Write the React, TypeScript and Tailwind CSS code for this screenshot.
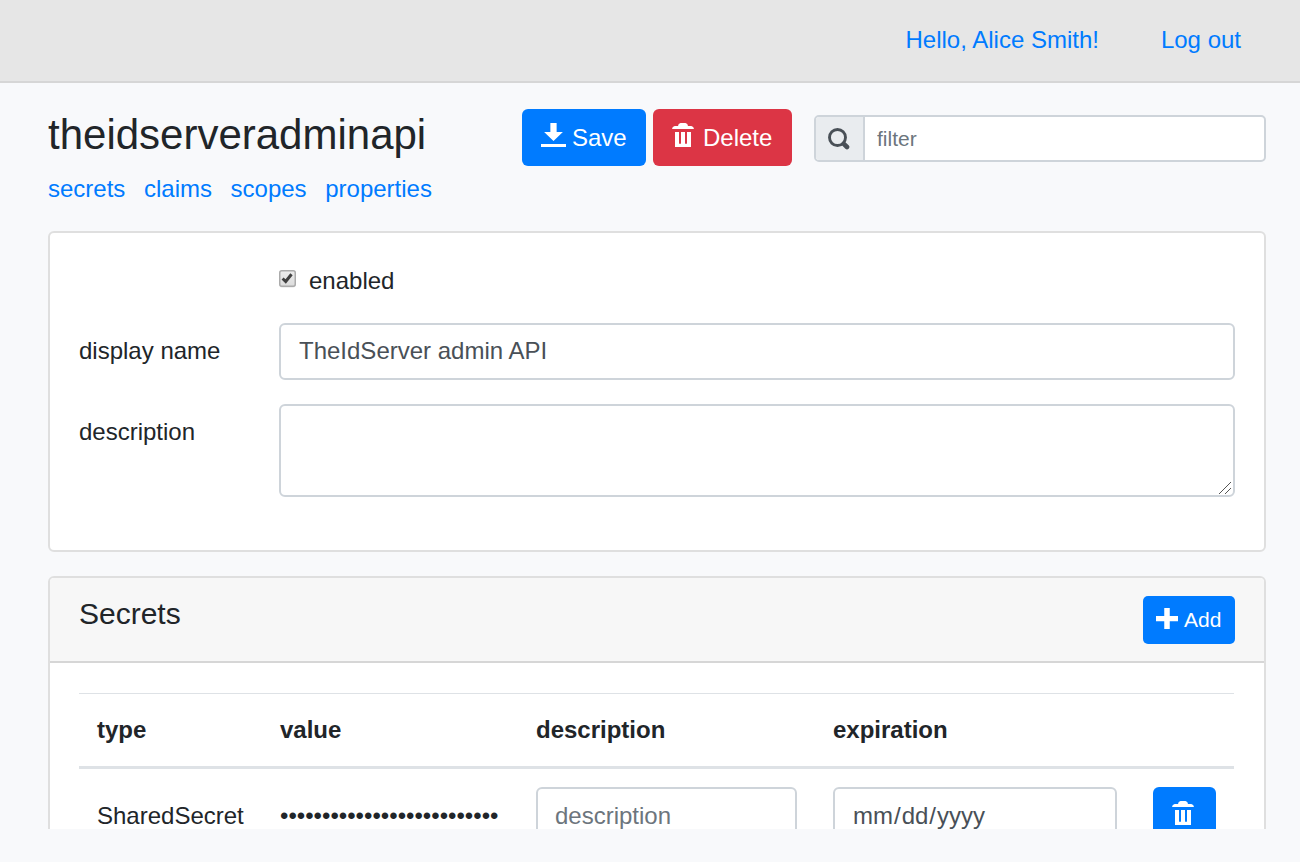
import React from 'react';

const ICONS = {
  download: 'M3 0v3h-2l3 3 3-3h-2v-3h-2zm-3 7v1h8v-1h-8z',
  plus: 'M3 0v3h-3v2h3v3h2v-3h3v-2h-3v-3h-2z',
};

function Icon({ name, className }: { name: keyof typeof ICONS; className: string }) {
  return (
    <svg viewBox="0 0 8 8" preserveAspectRatio="none" className={className} fill="currentColor" aria-hidden="true">
      <path d={ICONS[name]} />
    </svg>
  );
}

function SearchIcon({ className }: { className: string }) {
  return (
    <svg viewBox="0 0 22 22" className={className} fill="none" stroke="currentColor" aria-hidden="true">
      <circle cx="9.500" cy="9.500" r="8" strokeWidth="2.900" />
      <path d="M15.800 15.800 19 19" strokeWidth="4.600" strokeLinecap="round" />
    </svg>
  );
}

/* Trash can with two slots open at the top */
function TrashIcon({ className }: { className: string }) {
  return (
    <svg viewBox="0 0 24 24" className={className} fill="currentColor" aria-hidden="true">
      <path d="M8.500 0h5q2.300.3 2.500 3h3.300q2.400.4 2.700 3H0q.3-2.600 2.700-3H6q.2-2.700 2.500-3zM3 9h4v10.700q0 1.300 1 1.300t1-1.300V9h4v10.700q0 1.300 1 1.300t1-1.300V9h4v15H3z" />
    </svg>
  );
}

function Header() {
  return (
    <header className="flex h-[83px] shrink-0 justify-end border-b-2 border-[#d6d6d6] bg-[#e6e6e6] pr-[59px] pt-[22px] text-[#007bff]">
      <a className="mr-[62px]">Hello, Alice Smith!</a>
      <a>Log out</a>
    </header>
  );
}

function Toolbar() {
  return (
    <div className="flex h-[148px] pt-[26px]">
      <div className="w-[474px]">
        <h1 className="h-[62px] text-[42px] leading-[51px]">theidserveradminapi</h1>
        <nav className="flex gap-[18.600px] text-[#007bff]">
          <a>secrets</a>
          <a>claims</a>
          <a>scopes</a>
          <a>properties</a>
        </nav>
      </div>
      <button className="flex h-[57px] w-[124px] rounded-[6px] bg-[#007bff] pl-[19px] pt-[11px] text-white">
        <Icon name="download" className="mt-[3px] h-6 w-[25px]" />
        <span className="ml-[6px]">Save</span>
      </button>
      <button className="ml-[7px] flex h-[57px] w-[139px] rounded-[6px] bg-[#dc3545] pl-[19px] pt-[11px] text-white">
        <TrashIcon className="mt-[3px] size-6" />
        <span className="ml-[7px]">Delete</span>
      </button>
      <div className="ml-[22px] mt-[6px] flex h-[47px] w-[452px] overflow-hidden rounded-[5px] border-2 border-[#ced4da] bg-white text-[21px]">
        <div className="w-[49px] border-r-2 border-[#ced4da] bg-[#e9ecef] pl-3 pt-[11px] text-[#495057]">
          <SearchIcon className="size-[22px]" />
        </div>
        <input
          placeholder="filter"
          className="min-w-0 flex-1 pl-3 pt-px outline-none placeholder:text-[#6c757d] placeholder:opacity-100"
        />
      </div>
    </div>
  );
}

function Checkbox() {
  return (
    <svg viewBox="0 0 17 18" className="mt-[7px] h-[18px] w-[17px]" aria-hidden="true">
      <defs>
        <linearGradient id="box" x1="0" y1="0" x2="0" y2="1">
          <stop offset="0" stopColor="#ececec" />
          <stop offset="1" stopColor="#dcdcdc" />
        </linearGradient>
      </defs>
      <rect x="0.500" y="1" width="16" height="16.500" rx="2.500" fill="#e3e3e3" />
      <rect x="0.750" y="0.750" width="15.500" height="15.500" rx="2" fill="url(#box)" stroke="#ababab" strokeWidth="1.500" />
      <path d="M3.600 8.500 6.700 11.500 12.500 4.200" fill="none" stroke="#404040" strokeWidth="3" />
    </svg>
  );
}

function DetailsCard() {
  return (
    <section className="h-[321px] rounded-[6px] border-2 border-[#dfdfdf] bg-white pl-[29px] pt-[30px]">
      <label className="ml-[200px] flex h-[60px]">
        <Checkbox />
        <span className="ml-[13px]">enabled</span>
      </label>
      <div className="flex h-[81px]">
        <label className="w-[200px] pt-[10px]">display name</label>
        <input
          defaultValue="TheIdServer admin API"
          className="h-[57px] w-[956px] rounded-[6px] border-2 border-[#ced4da] px-[18px] pb-px text-[#495057] outline-none"
        />
      </div>
      <div className="flex">
        <label className="w-[200px] pt-[10px]">description</label>
        <div className="relative h-[93px] w-[956px]">
          <textarea className="block h-[93px] w-[956px] resize-none rounded-[6px] border-2 border-[#ced4da] px-[18px] py-2 outline-none" />
          <svg viewBox="0 0 12 12" className="absolute bottom-[3px] right-1 size-3" stroke="#555" aria-hidden="true">
            <path d="M0 12 12 0M6 12l6-6" />
          </svg>
        </div>
      </div>
    </section>
  );
}

function SecretsCard() {
  return (
    <section className="mt-6 h-[360px] shrink-0 overflow-hidden rounded-[6px] border-2 border-[#dfdfdf] bg-white">
      <div className="flex h-[85px] justify-between border-b-2 border-[#d6d6d6] bg-[#f7f7f7] pl-[29px] pr-[29px] pt-[18px]">
        <h2 className="text-[30px] leading-9">Secrets</h2>
        <button className="flex h-12 w-[92px] rounded-[5px] bg-[#007bff] pl-[13px] pt-[8px] text-[21px] leading-8 text-white">
          <Icon name="plus" className="mt-[4px] h-[21px] w-[22px]" />
          <span className="ml-[6px]">Add</span>
        </button>
      </div>
      <div className="ml-[29px] mt-[30px] w-[1155px] border-t border-[#dee2e6]">
        <div className="grid h-[75px] grid-cols-[183px_256px_297px_1fr] border-b-3 border-[#dee2e6] pl-[18px] pt-[18px] font-bold">
          <span>type</span>
          <span>value</span>
          <span>description</span>
          <span>expiration</span>
        </div>
        <div className="grid grid-cols-[183px_256px_297px_320px_63px] pl-[18px] pt-[18px]">
          <span className="pt-[11px]">SharedSecret</span>
          <span className="pt-[11px]">{'•'.repeat(26)}</span>
          <input
            placeholder="description"
            className="h-[57px] w-[261px] rounded-[6px] border-2 border-[#ced4da] px-[17px] outline-none placeholder:text-[#6c757d] placeholder:opacity-100"
          />
          <div className="flex h-[57px] w-[284px] gap-px rounded-[6px] border-2 border-[#ced4da] pl-[18px] pt-[9px] text-[#495057]">
            <span>mm</span>
            <span>/</span>
            <span>dd</span>
            <span>/</span>
            <span>yyyy</span>
          </div>
          <button className="flex h-[57px] w-[63px] rounded-[6px] bg-[#007bff] pl-[19px] pt-[14px] text-white">
            <TrashIcon className="size-6" />
          </button>
        </div>
      </div>
    </section>
  );
}

export default function App() {
  return (
    <div className="flex h-[862px] w-[1300px] flex-col overflow-hidden bg-[#f8f9fb] font-['Liberation_Sans',Arial,sans-serif] text-[24px] leading-9 text-[#212529]">
      <Header />
      <main className="h-[746px] overflow-hidden pl-12 pr-[34px]">
        <Toolbar />
        <DetailsCard />
        <SecretsCard />
      </main>
    </div>
  );
}
